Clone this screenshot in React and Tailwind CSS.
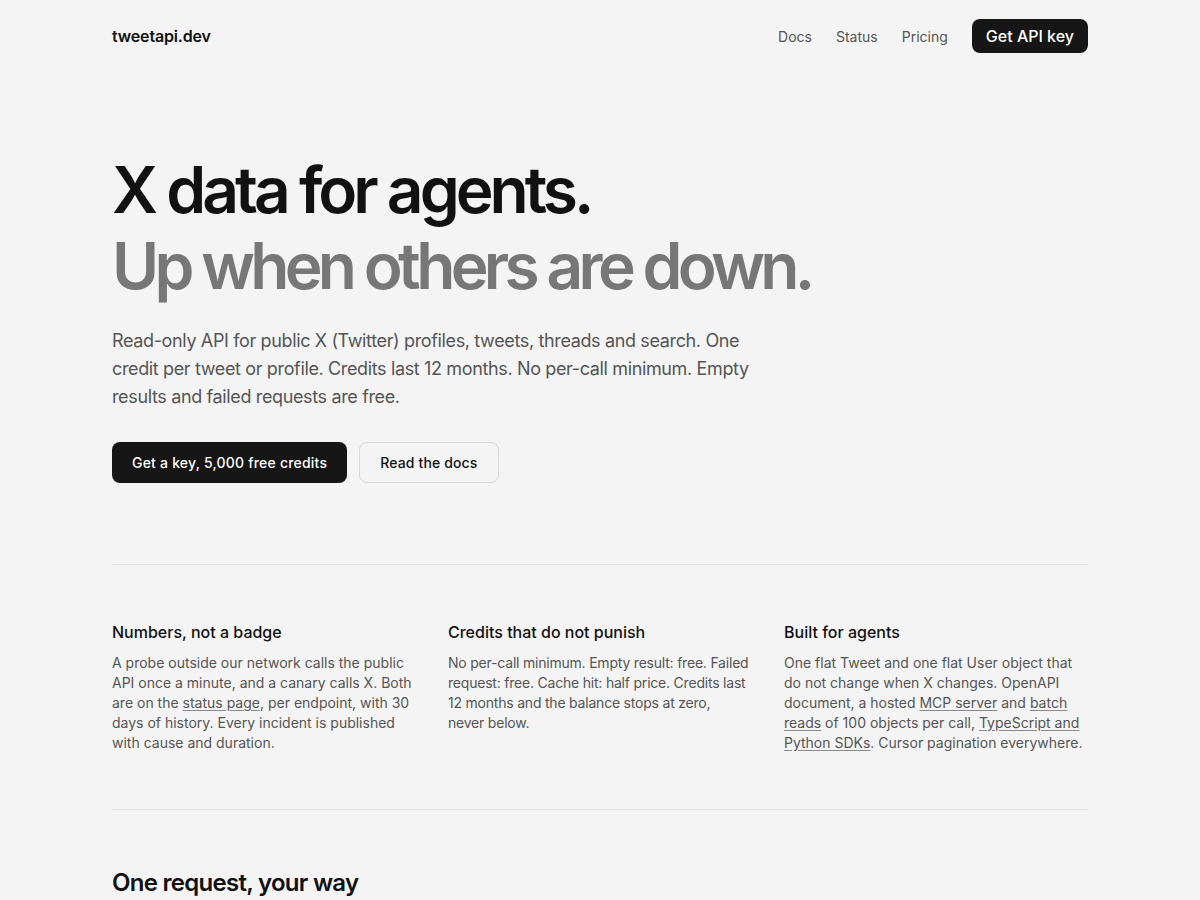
export default function App() {
  const link = 'underline underline-offset-2 decoration-[#8a8a8a]';
  return (
    <div className="min-h-screen bg-[#f4f4f4] text-[#111] font-['Inter',sans-serif]">
      <div className="mx-auto w-[976px]">
        <header className="flex h-[72px] items-center justify-between">
          <div className="text-[16px] font-semibold tracking-[-0.01em]">tweetapi.dev</div>
          <nav className="flex items-center gap-6 text-[14px] text-[#555]">
            <a>Docs</a>
            <a>Status</a>
            <a>Pricing</a>
            <a className="rounded-lg bg-[#161616] px-[14px] py-[5px] text-[16px] font-medium text-white">Get API key</a>
          </nav>
        </header>

        <section className="pt-[80px] pb-[81px]">
          <h1 className="text-[64px] font-semibold leading-[76px]">
            <span className="block tracking-[-0.062em]">X data for agents.</span>
            <span className="block tracking-[-0.073em] text-[#777]">Up when others are down.</span>
          </h1>
          <p className="mt-[23px] w-[650px] text-[18px] leading-[28px] tracking-[-0.02em] text-[#555]">
            Read-only API for public X (Twitter) profiles, tweets, threads and search. One credit per tweet or profile. Credits last 12 months. No per-call minimum. Empty results and failed requests are free.
          </p>
          <div className="mt-[31px] flex gap-3">
            <a className="flex h-[41px] items-center rounded-lg bg-[#161616] px-5 text-[14px] font-medium tracking-[0.015em] text-white">Get a key, 5,000 free credits</a>
            <a className="flex h-[41px] items-center rounded-lg border border-[#d8d8d8] px-5 text-[14px] font-medium tracking-[0.01em] text-[#111]">Read the docs</a>
          </div>
        </section>

        <div className="border-t border-[#e2e2e2]" />

        <section className="grid grid-cols-3 gap-8 pt-[55px] pb-[56px]">
          <div>
            <h3 className="text-[16px] font-medium">Numbers, not a badge</h3>
            <p className="mt-[9px] text-[14px] leading-[20px] text-[#555]">
              A probe outside our network calls the public API once a minute, and a canary calls X. Both are on the <a className={link}>status page</a>, per endpoint, with 30 days of history. Every incident is published with cause and duration.
            </p>
          </div>
          <div>
            <h3 className="text-[16px] font-medium">Credits that do not punish</h3>
            <p className="mt-[9px] text-[14px] leading-[20px] tracking-[-0.015em] text-[#555]">
              No per-call minimum. Empty result: free. Failed request: free. Cache hit: half price. Credits last 12 months and the balance stops at zero,<br />never below.
            </p>
          </div>
          <div>
            <h3 className="text-[16px] font-medium">Built for agents</h3>
            <p className="mt-[9px] text-[14px] leading-[20px] text-[#555]">
              One flat Tweet and one flat User object that do not change when X changes. OpenAPI document, a hosted <a className={link}>MCP server</a> and <a className={link}>batch reads</a> of 100 objects per call, <a className={link}>TypeScript and Python SDKs</a>. Cursor pagination everywhere.
            </p>
          </div>
        </section>

        <div className="border-t border-[#e2e2e2]" />

        <section className="pt-[55px]">
          <h2 className="text-[24px] font-semibold tracking-[-0.03em]">One request, your way</h2>
        </section>
      </div>
    </div>
  );
}
